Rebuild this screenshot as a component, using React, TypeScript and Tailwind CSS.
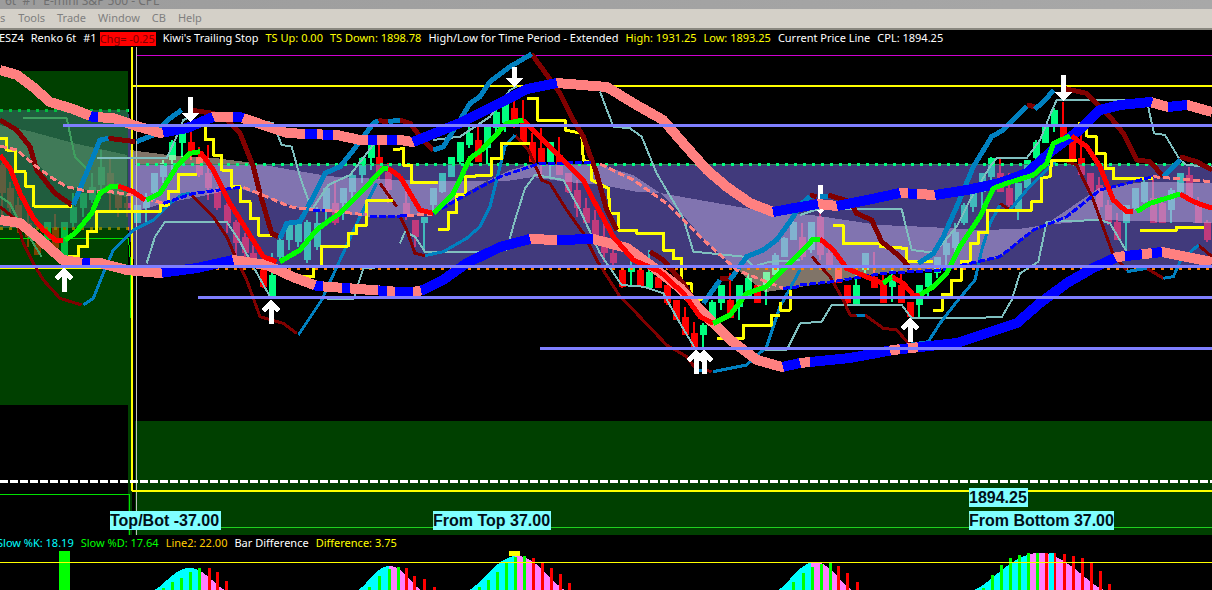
const scaled = (ox: number, oy: number, pts: string) =>
  pts.split(' ').map((p) => {
    const [x, y] = p.split(',').map(Number)
    return `${ox + x / 3},${oy + y / 3}`
  }).join(' ')

// the chart got traced in three crops, each with its own origin
const L = (p: string) => scaled(0, 60, p)
const M = (p: string) => scaled(400, 40, p)
const R = (p: string) => scaled(800, 60, p)

type Pt = [number, number]
const parse = (s: string): Pt[] => s.split(' ').map((p) => p.split(',').map(Number) as Pt)

// part of a polyline between two x values
const between = (pts: Pt[], a: number, b: number) => {
  const yAt = (x: number) => {
    for (let i = 1; i < pts.length; i++) {
      if (x <= pts[i][0]) {
        const [x0, y0] = pts[i - 1]
        const [x1, y1] = pts[i]
        return y0 + ((y1 - y0) * (x - x0)) / (x1 - x0)
      }
    }
    return pts[pts.length - 1][1]
  }
  const inner = pts.filter(([x]) => x > a && x < b)
  return [[a, yAt(a)], ...inner, [b, yAt(b)]].map((p) => p.join(',')).join(' ')
}

const upperBand = parse('0,70 17,75 33,87 50,102 73,109 93,117 113,118 133,125 160,133 187,128 213,117 240,117 263,125 287,133 307,134 337,135 360,140 400,140 413,142 460,123 500,103 527,89 557,83 607,87 633,103 663,120 683,143 707,170 727,187 750,203 773,212 800,207 818,204 837,206 867,200 900,193 935,195 967,190 1000,183 1027,173 1053,150 1077,132 1100,110 1120,105 1150,102 1168,107 1187,105 1212,112')
const upperBlue = [[90, 98], [163, 213], [233, 243], [305, 317], [323, 333], [368, 377], [387, 397], [413, 557], [773, 818], [837, 900], [908, 917], [935, 1152], [1168, 1187]]
const lowerBand = parse('0,220 20,223 37,237 63,260 83,263 100,263 127,270 160,273 197,268 233,260 267,265 293,277 317,286 400,292 413,292 423,290 443,280 467,263 500,247 530,239 557,240 593,239 627,248 653,267 680,288 710,320 733,342 757,360 782,367 800,363 850,358 893,350 957,343 987,333 1017,323 1040,303 1067,283 1093,268 1117,257 1162,252 1212,262')
const lowerBlue = [[82, 90], [162, 233], [315, 323], [342, 350], [378, 387], [395, 413], [421, 530], [557, 593], [783, 800], [810, 890], [900, 908], [918, 1115], [1125, 1142], [1152, 1162]]

// c = colour, x, wick top, body top, body bottom, wick bottom (crop pixels)
const candlesL = 'r5,310,315,400,470 r30,365,385,445,480 r55,410,435,480,520 r85,460,490,530,560 r112,530,550,585,585 g140,485,485,540,560 r165,462,500,565,590 g193,485,485,610,620 g220,400,440,490,510 g248,400,400,445,470 g275,340,380,420,430 g303,270,320,375,400 r330,290,340,390,450 r355,370,405,445,470 r380,400,430,445,470 g410,435,435,490,490 g437,400,420,445,485 g463,340,340,400,420 g490,300,310,350,370 g517,240,245,300,340 g545,215,220,250,290 r572,210,245,280,300 r598,260,290,345,350 r625,255,340,385,420 r652,380,390,445,450 r680,430,435,490,520 r707,480,485,550,590 r735,520,530,580,600 r760,555,580,625,630 r788,620,630,680,685 g815,580,645,710,710 g840,520,540,590,600 g868,485,485,540,570 g895,480,485,545,560 g922,480,485,600,610 g950,440,490,560,570 g977,385,385,450,490 r1005,360,430,490,495 g1030,385,385,430,480 g1057,340,345,395,420 g1085,290,295,345,370 g1112,250,250,295,330 r1138,250,290,340,360 r1165,310,335,390,430'
const candlesM = 'r18,450,490,530,540 r46,540,540,590,620 g73,530,530,550,635 g100,445,445,495,520 g127,400,400,455,460 g154,350,350,410,410 g181,305,305,365,375 g208,260,280,315,325 r235,255,300,365,365 g262,255,258,325,375 g289,210,215,265,275 g316,170,190,250,275 r343,175,205,262,265 r370,180,250,310,310 r397,280,305,365,365 r424,265,325,365,420 g451,305,305,365,410 r478,290,345,405,405 r505,400,400,455,460 r532,420,450,505,530 r559,475,505,550,550 r586,510,540,590,600 r613,550,590,640,665 r640,620,640,670,690 r667,680,690,740,745 g694,660,685,695,740 r721,680,690,740,740 g748,630,695,745,745 r775,700,710,745,745 r802,735,735,790,795 r829,780,780,840,840 r856,800,830,885,885 r883,845,880,920,920 g910,850,855,885,920 g937,780,785,840,840 g964,735,735,790,810 r991,700,780,835,835 g1018,735,735,800,840 g1045,700,715,770,770 r1072,735,735,790,790 g1099,695,695,745,795 g1126,640,645,705,705 g1153,590,595,650,650 g1180,540,545,600,600'
const candlesR = 'r7,490,530,590,600 g34,485,485,570,580 r61,410,470,585,600 r88,555,580,620,630 r115,620,625,670,670 r142,675,675,730,735 g169,640,675,735,735 g196,580,580,630,640 r223,575,650,685,685 r250,645,675,730,730 g277,615,650,680,725 r304,640,675,730,730 r331,725,725,770,770 g358,675,675,735,770 g385,640,640,680,715 g412,590,590,640,655 g439,540,550,585,620 g466,490,515,565,590 g493,430,435,490,495 g520,385,385,440,455 g547,340,340,395,455 g574,290,295,350,360 r601,295,340,395,395 r628,340,385,435,440 g655,370,370,450,480 g682,300,300,385,385 g709,240,245,295,300 g736,195,200,250,250 g763,145,150,200,215 r790,125,200,230,235 r817,240,240,300,300 r844,225,295,345,345 r871,340,340,395,395 r898,350,375,440,450 r925,420,435,490,495 r952,460,485,540,540 g979,435,435,490,575 g1006,385,385,445,450 g1033,350,365,425,430 r1060,355,415,490,490 r1087,410,430,490,490 g1114,385,390,450,490 g1141,340,340,395,400 r1168,320,345,415,415 r1195,410,435,490,490 r1222,480,485,540,545'

const Candles = ({data, ox, oy}: {data: string; ox: number; oy: number}) => (
  <>
    {data.split(' ').map((item) => {
      const color = item[0] === 'r' ? '#ff0000' : '#00ff7f'
      const [x, wt, bt, bb, wb] = item.slice(1).split(',').map(Number)
      const cx = Math.round(ox + x / 3)
      return (
        <g key={item} fill={color}>
          <rect x={cx - 1} y={oy + wt / 3} width={2} height={(wb - wt) / 3} />
          <rect x={cx - 3} y={oy + bt / 3} width={7} height={(bb - bt) / 3} />
        </g>
      )
    })}
  </>
)

const Line = ({pts, color, w = 2, dash}: {pts: string; color: string; w?: number; dash?: string}) => (
  <polyline points={pts} fill="none" stroke={color} strokeWidth={w} strokeLinejoin="round" strokeDasharray={dash} />
)

const DARK = '#800000'
const BLUE = '#0080c0'
const TEAL = '#7fbfbf'
const YELLOW = '#ffff00'
const PURPLE = '#7f7fff'

const thickDark = [L('0,180 50,210 90,260 110,330 165,400 215,435'), L('325,235 405,245'), L('570,150 640,160 680,180 720,220 760,320 780,400 815,520 835,530'), L('1135,182 1165,185'), M('0,240 30,250 60,290 100,330'), M('395,42 430,90 480,160 520,240 550,290 590,400 620,510 650,570'), M('750,635 790,660 850,730 875,770'), M('960,715 990,715'), R('30,405 50,410'), R('85,405 150,425 170,460 215,480 245,545 300,590 330,625'), R('680,135 705,140'), R('790,85 860,100 930,170 970,220 1010,300 1050,305 1090,350'), R('1140,290 1190,305 1236,330')]
const thickBlue = [L('220,435 300,240 325,235'), L('410,245 460,225 510,175 545,150'), L('840,535 860,490 900,485 940,410 975,340 1020,320 1060,270 1120,190 1135,182'), L('1165,185 1200,180'), M('100,330 130,320 180,240 210,190 240,170 270,125 330,80 395,42'), M('910,790 960,720'), M('990,720 1040,650 1090,630 1130,600 1180,530 1200,495'), R('0,435 30,410'), R('60,410 85,410'), R('355,610 400,580 430,530 470,440 520,320 575,230 610,210 680,140'), R('705,148 740,115 760,90'), R('1090,350 1140,300')]
const thinDark = [L('0,440 50,480 70,550 100,610 130,660 180,715 245,735'), L('570,400 640,470 680,530 710,600 740,660 780,770 850,790 890,820'), L('1140,370 1190,440'), M('0,530 20,570 45,640 75,647'), M('345,285 385,330 425,420 450,430 500,510 550,580 590,660 660,770 700,810 800,915 860,950 890,990'), M('915,990 935,995'), R('36,590 90,650 130,720 150,765 195,765 250,805 290,810 330,855'), R('600,430 630,450'), R('790,300 830,315 880,420 940,585 980,630'), R('1040,625 1090,655'), R('1195,555 1236,590')]
const thinBlue = [L('250,735 280,715 310,640 340,570 400,510 460,480 510,430 545,405 570,400'), L('895,825 965,720 1020,600 1080,470 1130,370'), M('75,647 130,635 200,595 240,560 270,500 290,420 315,320 345,285'), M('890,990 915,990'), M('940,995 1040,975 1100,920 1140,800 1200,690'), R('170,768 195,765'), R('335,852 385,845 420,790 470,725 525,660 545,570 570,490 600,435'), R('630,450 680,390 720,350 765,305'), R('980,635 1040,625'), R('1090,655 1120,650 1140,605 1195,555')]
const teal = [L('290,295 500,295 525,240 550,180 590,165'), L('800,185 820,190 845,255 875,260 900,350 935,450 985,375 1050,345 1085,300 1130,240'), L('440,610 465,530 495,485 680,485 720,545 760,620 810,710 1060,718 1090,625 1200,617'), M('0,610 15,575 45,590 75,635 265,635 320,630 345,540 375,445 405,405 490,420 540,510 600,640 665,735 730,740 790,760 840,850 885,925 1160,930 1200,850'), M('100,300 180,290 270,230 330,150 350,140'), M('600,155 640,260 690,265 725,290 770,400 850,535 880,635 1030,650 1060,680 1110,665 1200,660'), R('0,790 65,785 95,735 305,735 335,775 605,772 635,720 660,640 715,605 740,485 900,480 930,490 980,575'), R('0,465 60,445 305,447 335,570 400,578'), R('420,560 470,500 510,420 570,320 590,295 680,295 720,240 750,165 770,120 1040,120 1062,220 1095,225 1140,300 1160,315 1236,320')]
const yellow = [L('0,235 20,235 20,270 45,270 45,335 75,335 75,378 100,378 100,438 215,440'), L('205,590 235,590 235,560 262,560 262,515 290,515 290,455 480,455 480,435 505,435 505,395 535,395 535,343 590,343'), L('615,200 615,238 640,238 640,285 665,285 665,330 695,330 695,380 720,380 720,425 750,425 750,475 775,475 775,525 830,525'), L('895,650 940,650 940,620 965,620 965,558 1045,558 1045,520 1070,520 1070,495 1100,495 1100,422 1180,422'), L('1180,268 1200,268'), M('0,325 10,325 10,375 35,375 35,428 115,428'), M('115,568 145,568 145,517 170,517 170,462 195,462 195,410 275,405 275,355 305,355 305,310 390,310'), M('380,175 412,175 412,240 495,240 495,270 545,280 550,360 575,370 575,420 625,445 630,520 655,520 655,570 710,570 710,580 790,580 790,630 820,630 820,655 845,655 845,730 873,730 873,775 910,780'), M('950,895 1030,895 1030,855 1115,855 1115,825 1140,825'), M('1140,785 1140,810 1170,810 1170,750'), R('100,497 130,497 130,550 240,550 240,560 320,565 320,605 400,605'), R('400,750 428,750 428,703 455,703 455,660 485,660 485,603 510,603 510,550 535,550 535,517 563,517 563,450 695,450 695,425 725,425 725,355 750,350 755,300 830,300'), R('835,190 860,190 860,228 888,228 888,280 915,280 915,325 940,325 940,355 1060,355'), R('1020,510 1130,510 1130,502 1212,502')]
const maRed = [L('0,285 30,325 60,400 100,475 130,510 165,540 190,540'), L('355,378 400,395 435,420'), L('600,275 640,330 690,430 740,510 790,590 830,605'), L('1165,325 1200,350'), M('0,410 30,460 60,510 100,520'), M('370,240 470,340 550,420 580,480 640,590 700,660 780,695 850,760 900,830 940,850'), R('60,537 100,570 140,625 210,655 250,670'), R('275,650 310,670 340,705 360,705'), R('815,228 860,260 900,320 940,420 980,455 1000,455'), R('1140,402 1180,425 1236,445')]
const maGreen = [L('195,540 225,520 275,460 300,400 335,378 355,378'), L('440,420 480,400 530,320 570,280 600,275'), L('840,605 900,570 950,510 990,480 1020,460 1080,400 1150,325 1165,325'), M('100,520 160,460 210,355 245,330 320,250 370,240'), M('940,850 990,825 1040,760 1100,740 1200,640'), R('0,580 40,537 60,537'), R('250,670 275,650'), R('360,705 400,680 440,640 480,560 540,470 580,385 620,370 700,345 740,310 760,250 810,228'), R('1010,455 1050,430 1140,402')]
const midPink = [L('0,258 50,270 110,320 150,350 200,380 270,395 330,395 400,405 490,430'), L('730,382 800,410 870,440 940,450'), L('975,450 1100,465'), M('20,527 100,522'), M('600,372 700,420 800,490 900,590 1010,690 1150,745'), R('1060,350 1236,365')]
const midBlue = [L('490,430 580,400 720,382'), L('940,450 975,450'), L('1110,468 1200,468'), M('0,527 20,527'), M('100,520 170,480 300,410 420,370 580,368'), M('1150,745 1200,740'), R('0,675 100,665 250,640 420,630 600,590 700,510 800,470 900,390 1060,350')]

const UpArrow = ({x, y}: {x: number; y: number}) => (
  <path d={`M${x} ${y + 24}V${y + 3}M${x - 8} ${y + 11}L${x} ${y + 3}L${x + 8} ${y + 11}`} fill="none" stroke="#fff" strokeWidth={5} />
)

const DownArrow = ({x, y, h}: {x: number; y: number; h: number}) => (
  <g fill="#fff">
    <rect x={x - 2} y={y} width={5} height={h} />
    <polygon points={`${x - 9},${y + h} ${x + 9},${y + h} ${x},${y + h + 9}`} />
  </g>
)

const MainChart = () => (
  <svg className="absolute inset-0" width={1212} height={488} viewBox="0 47 1212 488" shapeRendering="crispEdges">
    <Candles data={candlesL} ox={0} oy={60} />
    <Candles data={candlesM} ox={400} oy={40} />
    <Candles data={candlesR} ox={800} oy={60} />
    <g fill="#ffe8d0" fillOpacity={0.5}>
      <polygon points="0,125 33,132 73,143 127,155 127,197 100,192 70,187 50,177 33,160 13,150 0,147" />
      <polygon points="130,150 168,155 215,158 253,163 292,170 322,175 338,177 358,178 425,181 487,181 453,200 440,210 420,215 370,217 298,208 245,190 238,188 198,197 165,203 130,213" />
      <polygon points="487,181 510,170 533,164 600,165 633,175 660,193 637,192 603,185 567,182 533,177 507,181" />
      <polygon points="660,193 773,213 812,215 879,225 929,227 979,230 1019,229 1045,225 1033,230 1000,257 940,270 883,273 833,282 800,287 765,292 747,278 730,263 707,243 687,220" />
      <polygon points="1045,225 1099,188 1145,182 1212,183 1212,223 1099,220" />
    </g>
    <polygon points="0,110 128,110 135,164 1212,164 1212,268 135,268 128,228 0,228" fill="#8274f8" fillOpacity={0.5} />
    <line x1={135} y1={164} x2={1212} y2={164} stroke="#3a8060" strokeWidth={1} />
    <line x1={0} y1={110} x2={130} y2={110} stroke="#00ff7f" strokeWidth={3} strokeDasharray="3 6" />
    <line x1={0} y1={228} x2={130} y2={228} stroke="#ff8000" strokeWidth={3} strokeDasharray="3 6" />
    <Line pts={L('70,175 200,175 225,290 265,330')} color={TEAL} />
    <Line pts={L('0,410 30,430 60,490 100,550 125,590')} color={TEAL} />
    <rect x={0} y={71} width={128} height={334} fill="#008000" fillOpacity={0.5} />
    <rect x={128} y={268} width={4} height={267} fill="#004000" />
    <rect x={135} y={421} width={1077} height={114} fill="#004000" />

    <line x1={137} y1={164} x2={1212} y2={164} stroke="#00ff7f" strokeWidth={3} strokeDasharray="3 6" />
    <line x1={135} y1={268} x2={1212} y2={268} stroke="#ff8000" strokeWidth={3} strokeDasharray="3 6" />
    <line x1={137} y1={55.5} x2={1212} y2={55.5} stroke="#d000d0" strokeWidth={1} />
    <line x1={132} y1={86} x2={1212} y2={86} stroke={YELLOW} strokeWidth={2} />
    <line x1={132} y1={47} x2={132} y2={491} stroke={YELLOW} strokeWidth={2} />
    <line x1={136.5} y1={47} x2={136.5} y2={535} stroke="#c0c0c0" strokeWidth={1} />
    <line x1={0} y1={268} x2={132} y2={268} stroke={YELLOW} strokeWidth={2} />
    <polyline points="0,238.5 128.5,238.5 130.5,263 130.5,318" fill="none" stroke="#00e000" strokeWidth={1} />
    <polyline points="0,494.5 129.5,494.5 129.5,535" fill="none" stroke="#00e000" strokeWidth={1} />
    <line x1={0} y1={481} x2={1212} y2={481} stroke="#fff" strokeWidth={3} strokeDasharray="8 2" />
    <line x1={132} y1={491} x2={1212} y2={491} stroke={YELLOW} strokeWidth={2} />
    <line x1={137} y1={527.5} x2={1212} y2={527.5} stroke="#20d020" strokeWidth={1} />

    <DownArrow x={820} y={185} h={20} />
    {teal.map((p) => <Line key={p} pts={p} color={TEAL} />)}
    {thinDark.map((p) => <Line key={p} pts={p} color={DARK} w={3} />)}
    {thinBlue.map((p) => <Line key={p} pts={p} color={BLUE} w={3} />)}
    {yellow.map((p) => <Line key={p} pts={p} color={YELLOW} w={3} />)}
    {thickDark.map((p) => <Line key={p} pts={p} color={DARK} w={5} />)}
    {thickBlue.map((p) => <Line key={p} pts={p} color={BLUE} w={5} />)}
    {midPink.map((p) => <Line key={p} pts={p} color="#ff8080" w={3} dash="7 3" />)}
    {midBlue.map((p) => <Line key={p} pts={p} color="#0000ff" w={3} dash="7 2" />)}
    <Line pts={between(lowerBand, 0, 1212)} color="#ff8080" w={10} />
    {lowerBlue.map(([a, b]) => <Line key={a} pts={between(lowerBand, a, b)} color="#0000ff" w={10} />)}
    <Line pts={between(upperBand, 0, 1212)} color="#ff8080" w={10} />
    {upperBlue.map(([a, b]) => <Line key={a} pts={between(upperBand, a, b)} color="#0000ff" w={10} />)}
    {maRed.map((p) => <Line key={p} pts={p} color="#ff0000" w={5} />)}
    {maGreen.map((p) => <Line key={p} pts={p} color="#00ff00" w={5} />)}

    <line x1={0} y1={266} x2={1212} y2={266} stroke={PURPLE} strokeWidth={3} />
    <line x1={63} y1={125} x2={1212} y2={125} stroke={PURPLE} strokeWidth={3} />
    <line x1={198} y1={297} x2={1212} y2={297} stroke={PURPLE} strokeWidth={3} />
    <line x1={540} y1={348} x2={1212} y2={348} stroke={PURPLE} strokeWidth={3} />

    <DownArrow x={190} y={97} h={16} />
    <DownArrow x={514} y={67} h={11} />
    <DownArrow x={1063} y={75} h={17} />
    <UpArrow x={64} y={268} />
    <UpArrow x={271} y={300} />
    <UpArrow x={910} y={318} />
    <UpArrow x={696} y={350} />
    <UpArrow x={704} y={350} />
  </svg>
)

type Hump = {s: number; peak: number; e: number; top: number; bars: number[][]}

const humps: Hump[] = [
  {s: 154, peak: 200, e: 225, top: 568, bars: [[163, 588, 0], [172, 582, 0], [181, 578, 0], [190, 572, 0], [199, 568, 0], [209, 568, 1], [217, 572, 1], [226, 581, 1]]},
  {s: 358, peak: 389, e: 421, top: 566, bars: [[369, 587, 0], [379, 576, 0], [389, 569, 0], [398, 567, 0], [406, 568, 1], [414, 576, 1], [424, 579, 1], [434, 587, 1]]},
  {s: 469, peak: 515, e: 565, top: 556, bars: [[479, 587, 0], [488, 580, 0], [497, 572, 0], [506, 563, 0], [515, 557, 0], [524, 556, 0], [533, 558, 1], [542, 563, 1], [551, 568, 1], [560, 574, 1], [569, 583, 1]]},
  {s: 778, peak: 811, e: 852, top: 562, bars: [[793, 582, 0], [803, 573, 0], [812, 567, 0], [821, 564, 0], [830, 563, 0], [838, 566, 1], [847, 573, 1], [857, 582, 1]]},
  {s: 974, peak: 1028, e: 1104, top: 553, bars: [[983, 588, 0], [992, 575, 0], [1001, 565, 0], [1010, 558, 0], [1019, 555, 0], [1028, 553, 0], [1037, 553, 0], [1046, 553, 1], [1054, 553, 1], [1064, 554, 1], [1073, 556, 1], [1082, 558, 1], [1091, 563, 1], [1100, 571, 1], [1109, 584, 1]]},
]

const humpY = (h: Hump, x: number) => 590 - (590 - h.top) * Math.pow(Math.sin((Math.PI * (x - h.s)) / (h.e - h.s)), 1.3)

const humpPoly = (h: Hump, a: number, b: number) => {
  const pts = [`${a},590`]
  for (let x = a; x <= b; x += 2) pts.push(`${x},${humpY(h, x)}`)
  pts.push(`${b},${humpY(h, b)}`, `${b},590`)
  return pts.join(' ')
}

const Indicator = () => (
  <svg className="block" width={1212} height={39} viewBox="0 551 1212 39" shapeRendering="crispEdges">
    <rect x={59} y={551} width={11} height={39} fill="#00ff00" />
    {humps.map((h) => (
      <g key={h.s}>
        <polygon points={humpPoly(h, h.s, h.peak)} fill="#00ffff" />
        <polygon points={humpPoly(h, h.peak, h.e)} fill="#ff80ff" />
        {h.bars.map(([x, top, red]) => (
          <rect key={x} x={x - 1} y={top} width={3} height={590 - top} fill={red ? '#ff0000' : '#00ff00'} />
        ))}
      </g>
    ))}
    <rect x={1049} y={553} width={5} height={37} fill="#00ffff" />
    <rect x={509} y={551} width={11} height={5} fill="#ffff00" />
    <line x1={0} y1={562.5} x2={1212} y2={562.5} stroke="#ffff00" strokeWidth={1} />
  </svg>
)

const Tag = ({className, children}: {className: string; children: string}) => (
  <div className={`absolute h-[19px] whitespace-nowrap bg-[#80ffff] font-['Liberation_Sans',sans-serif] text-[16px] font-bold leading-[19px] text-[#001018] ${className}`}>{children}</div>
)

export default function App() {
  return (
    <div className="flex h-[590px] w-[1212px] flex-col overflow-hidden bg-black font-['Noto_Sans',sans-serif] text-[11px]">
      <div className="h-[9px] shrink-0 overflow-hidden bg-gradient-to-r from-[#9c9c9c] to-[#a8a8a8]">
        <p className="ml-[5px] -mt-[9px] whitespace-pre text-[12px] leading-[20px] text-[#6f6f6f]">6t  #1  E-mini S&amp;P 500 - CPL</p>
      </div>
      <div className="flex h-[21px] shrink-0 items-center gap-[12px] border-b-2 border-[#8a8880] bg-[#d4d0c8] text-[11px] text-[#7f7f7f]">
        <span className="mr-px">s</span>
        <span>Tools</span>
        <span>Trade</span>
        <span>Window</span>
        <span>CB</span>
        <span>Help</span>
      </div>
      <div className="flex h-[17px] shrink-0 items-center gap-[7px] whitespace-nowrap text-white">
        <span className="-ml-px">ESZ4</span>
        <span>Renko 6t</span>
        <span>#1</span>
        <span className="-ml-[4px] h-[14px] w-[56px] overflow-hidden bg-[#ff0000] leading-[14px] text-[#800000]">Chg= -0.25</span>
        <span>Kiwi's Trailing Stop</span>
        <span className="text-[#ffff00]">TS Up: 0.00</span>
        <span className="text-[#ffff00]">TS Down: 1898.78</span>
        <span>High/Low for Time Period - Extended</span>
        <span className="text-[#ffff00]">High: 1931.25</span>
        <span className="text-[#ffff00]">Low: 1893.25</span>
        <span>Current Price Line</span>
        <span>CPL: 1894.25</span>
      </div>
      <div className="relative h-[488px] shrink-0">
        <MainChart />
        <Tag className="left-[969px] top-[441px] w-[59px]">1894.25</Tag>
        <Tag className="left-[110px] top-[464px] w-[111px]">Top/Bot -37.00</Tag>
        <Tag className="left-[433px] top-[464px] w-[118px]">From Top 37.00</Tag>
        <Tag className="left-[969px] top-[464px] w-[145px]">From Bottom 37.00</Tag>
      </div>
      <div className="-ml-[3px] flex h-[16px] shrink-0 items-center gap-[7px] whitespace-nowrap">
        <span className="text-[#00ffff]">Slow %K: 18.19</span>
        <span className="text-[#00ff00]">Slow %D: 17.64</span>
        <span className="text-[#ffcc00]">Line2: 22.00</span>
        <span className="text-white">Bar Difference</span>
        <span className="text-[#ffff00]">Difference: 3.75</span>
      </div>
      <Indicator />
    </div>
  )
}
